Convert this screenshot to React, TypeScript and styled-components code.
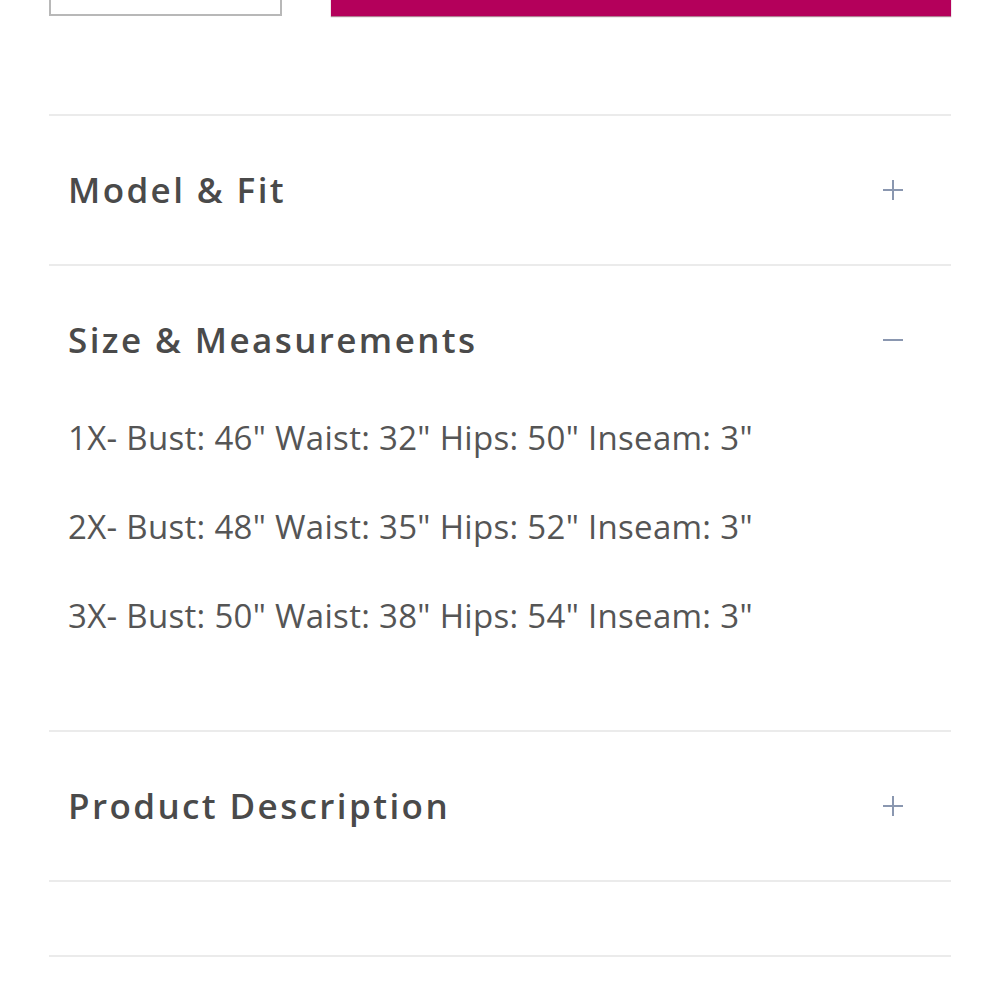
import styled, { createGlobalStyle } from "styled-components";

const Global = createGlobalStyle`
  html, body {
    margin: 0;
    padding: 0;
    background: #fff;
    overflow: hidden;
  }
  body {
    font-family: "Open Sans", "Liberation Sans", sans-serif;
  }
`;

const Page = styled.div`
  width: 1000px;
  height: 1000px;
  padding: 0 49px;
  box-sizing: border-box;
  overflow: hidden;
`;

const BuyRow = styled.div`
  display: flex;
  gap: 49px;
  height: 60px;
  margin-top: -44px;
  margin-bottom: 98px;
`;

const QtyBox = styled.div`
  width: 233px;
  box-sizing: border-box;
  border: 2px solid #b8b8b8;
  background: #fff;
`;

const AddButton = styled.button`
  flex: 1;
  border: none;
  background: #b4005b;
  box-shadow: 0 1px 1px rgba(100, 0, 40, 0.5);
`;

const Divider = styled.div`
  height: 2px;
  background: #ebebeb;
`;

const Section = styled.div``;

const Header = styled.div`
  display: flex;
  align-items: center;
  justify-content: space-between;
  height: 148px;
  padding: 0 48px 0 19px;
`;

const Title = styled.div`
  font-size: 35px;
  font-weight: 600;
  letter-spacing: 2.4px;
  color: #4a4a4a;
  margin-top: -2px;
`;

const Icon = styled.svg`
  width: 20px;
  height: 20px;
  stroke: #8a97b0;
  stroke-width: 2;
`;

const Body = styled.div`
  display: flex;
  flex-direction: column;
  gap: 45px;
  padding: 2px 19px 92px;
`;

const Line = styled.div`
  font-size: 33px;
  line-height: 44px;
  color: #555;
  letter-spacing: 0.3px;
`;

const Spacer = styled.div`
  height: 73px;
`;

function Toggle({ open }: { open: boolean }) {
  return (
    <Icon viewBox="0 0 20 20">
      <line x1="0" y1="10" x2="20" y2="10" />
      {!open && <line x1="10" y1="0" x2="10" y2="20" />}
    </Icon>
  );
}

const sizes = [
  '1X- Bust: 46" Waist: 32" Hips: 50" Inseam: 3"',
  '2X- Bust: 48" Waist: 35" Hips: 52" Inseam: 3"',
  '3X- Bust: 50" Waist: 38" Hips: 54" Inseam: 3"',
];

export default function App() {
  return (
    <>
      <Global />
      <Page>
        <BuyRow>
          <QtyBox />
          <AddButton aria-label="Add to cart" />
        </BuyRow>
        <Divider />
        <Section>
          <Header>
            <Title>Model &amp; Fit</Title>
            <Toggle open={false} />
          </Header>
        </Section>
        <Divider />
        <Section>
          <Header>
            <Title>Size &amp; Measurements</Title>
            <Toggle open />
          </Header>
          <Body>
            {sizes.map((s) => (
              <Line key={s}>{s}</Line>
            ))}
          </Body>
        </Section>
        <Divider />
        <Section>
          <Header>
            <Title>Product Description</Title>
            <Toggle open={false} />
          </Header>
        </Section>
        <Divider />
        <Spacer />
        <Divider />
      </Page>
    </>
  );
}
